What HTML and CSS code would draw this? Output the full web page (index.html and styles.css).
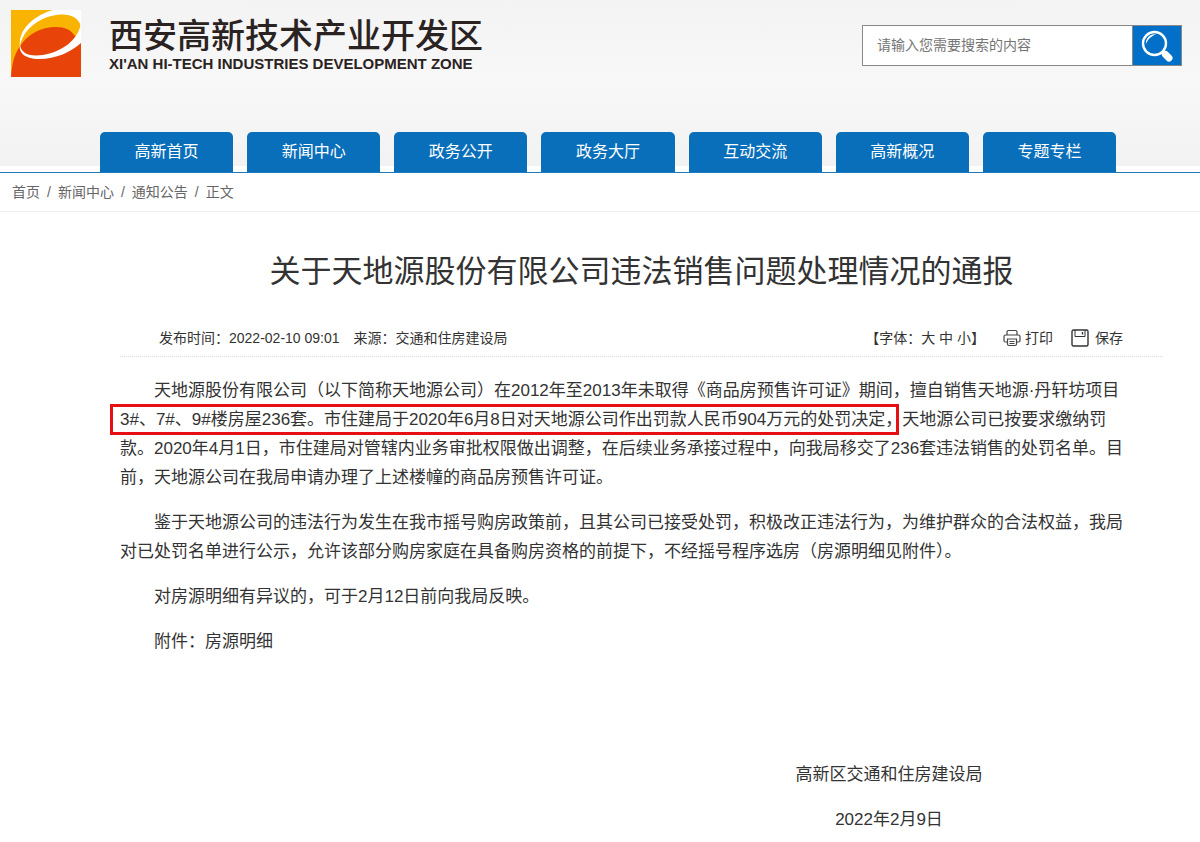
FILE: index.html
```html
<!DOCTYPE html>
<html lang="zh-CN">
<head>
<meta charset="utf-8">
<meta name="viewport" content="width=device-width, initial-scale=1">
<title>关于天地源股份有限公司违法销售问题处理情况的通报</title>
<link rel="stylesheet" href="styles.css">
</head>
<body>
<header class="site-header">
  <div class="masthead">
    <a class="brand" href="#">
      <svg class="brand-mark" viewBox="0 0 70 67" aria-hidden="true">
        <path fill="#f8b400" d="M0 0H70V67H0Z"/>
        <path fill="#e84309" d="M0 67C1 54 3 45 9 36C17 24 30 17 45 17C54 17 60 20 63 25L70 30V67Z"/>
        <path fill="#fff" d="M42 0H70V17C68 7 58 3 45 5C27 8 12 20 9 36C7 19 24 5 42 0Z"/>
        <path fill="#fff" d="M9 33C9 43 17 47 32 45C50 42 67 31 70 13V33C60 42 45 49 28 49C13 49 7 42 9 33Z"/>
      </svg>
      <span class="brand-text">
        <span class="brand-cn">西安高新技术产业开发区</span>
        <span class="brand-en">XI'AN HI-TECH INDUSTRIES DEVELOPMENT ZONE</span>
      </span>
    </a>
    <form class="search">
      <input class="search-input" type="text" aria-label="搜索" placeholder="请输入您需要搜索的内容">
      <button class="search-button" type="submit" aria-label="搜索">
        <svg viewBox="0 0 34 34" aria-hidden="true">
          <circle cx="14.500" cy="14.500" r="11.500" fill="none" stroke="#fff" stroke-width="2.400"/>
          <path d="M6 15C5.500 9 10 5 16 5C11 7.500 8 10 6 15Z" fill="#fff"/>
          <path d="M22 22L25 25" stroke="#fff" stroke-width="3"/>
          <path d="M25.500 25.500L29 29" stroke="#fff" stroke-width="7" stroke-linecap="round"/>
        </svg>
      </button>
    </form>
  </div>
  <nav class="main-nav">
    <a href="#">高新首页</a>
    <a href="#">新闻中心</a>
    <a href="#">政务公开</a>
    <a href="#">政务大厅</a>
    <a href="#">互动交流</a>
    <a href="#">高新概况</a>
    <a href="#">专题专栏</a>
  </nav>
</header>
<nav class="breadcrumb" aria-label="当前位置">
  <a href="#">首页</a><span>/</span><a href="#">新闻中心</a><span>/</span><a href="#">通知公告</a><span>/</span><a href="#">正文</a>
</nav>
<main class="article">
  <h1 class="title">关于天地源股份有限公司违法销售问题处理情况的通报</h1>
  <div class="meta">
    <div class="meta-info">
      <span>发布时间：2022-02-10 09:01</span>
      <span>来源：交通和住房建设局</span>
    </div>
    <div class="meta-tools">
      <div>【字体：<button type="button">大</button> <button type="button">中</button> <button type="button">小</button>】</div>
      <button type="button" class="tool">
        <svg viewBox="0 0 18 18" fill="none" stroke="#444" stroke-width="1.200" aria-hidden="true">
          <path d="M4 6V3Q4 1.500 5.500 1.500H12.500Q14 1.500 14 3V6"/>
          <path d="M4 13H2.500Q1 13 1 11.500V7.500Q1 6 2.500 6H15.500Q17 6 17 7.500V11.500Q17 13 15.500 13H14"/>
          <path d="M4.500 10H13.500V15Q13.500 16.500 12 16.500H6Q4.500 16.500 4.500 15ZM6.500 12.500H11.500M6.500 14.500H11.500"/>
        </svg>打印</button>
      <button type="button" class="tool tool-save">
        <svg viewBox="0 0 18 18" fill="none" stroke="#333" stroke-width="1.400" aria-hidden="true">
          <rect x="1" y="1" width="16" height="16" rx="1.500"/>
          <path d="M4 1V7.500H14V1" stroke-width="1"/>
          <path d="M11.500 3V5.500"/>
        </svg>保存</button>
    </div>
  </div>
  <div class="content">
    <p>天地源股份有限公司（以下简称天地源公司）在2012年至2013年未取得《商品房预售许可证》期间，擅自销售天地源·丹轩坊项目<br><mark class="key">3#、7#、9#楼房屋236套。市住建局于2020年6月8日对天地源公司作出罚款人民币904万元的处罚决定</mark>，天地源公司已按要求缴纳罚<br>款。2020年4月1日，市住建局对管辖内业务审批权限做出调整，在后续业务承接过程中，向我局移交了236套违法销售的处罚名单。目<br>前，天地源公司在我局申请办理了上述楼幢的商品房预售许可证。</p>
    <p>鉴于天地源公司的违法行为发生在我市摇号购房政策前，且其公司已接受处罚，积极改正违法行为，为维护群众的合法权益，我局<br>对已处罚名单进行公示，允许该部分购房家庭在具备购房资格的前提下，不经摇号程序选房（房源明细见附件）。</p>
    <p>对房源明细有异议的，可于2月12日前向我局反映。</p>
    <p>附件：房源明细</p>
  </div>
  <footer class="signature">
    <p>高新区交通和住房建设局</p>
    <p>2022年2月9日</p>
  </footer>
</main>
</body>
</html>
```

FILE: styles.css
```css
* {
  box-sizing: border-box;
}

body {
  margin: 0;
  background: #fff;
  color: #333;
  font-family: "Liberation Sans", "Noto Sans CJK SC", sans-serif;
  font-size: 14px;
}

a {
  color: inherit;
  text-decoration: none;
}

button {
  padding: 0;
  border: 0;
  background: none;
  color: inherit;
  font: inherit;
  cursor: pointer;
}

.site-header {
  border-bottom: 1px solid #2079bb;
  background: linear-gradient(#f3f3f3, #f8f8f8 50%, #f2f2f2) top / 100% 166px no-repeat;
}

.masthead {
  display: flex;
  justify-content: space-between;
  align-items: flex-start;
  height: 132px;
  padding: 10px 18px 0 11px;
}

.brand {
  display: flex;
  gap: 28px;
  color: #2b2322;
}

.brand-mark {
  width: 70px;
  height: 67px;
}

.brand-text {
  display: flex;
  flex-direction: column;
  padding-top: 8px;
  font-weight: 700;
  white-space: nowrap;
}

.brand-cn {
  font-size: 34px;
  font-weight: 500;
  line-height: 36px;
}

.brand-en {
  font-size: 15px;
  line-height: 20px;
}

.search {
  display: flex;
  width: 320px;
  height: 41px;
  margin-top: 15px;
  border: 1px solid #888;
}

.search-input {
  flex: 1;
  min-width: 0;
  padding: 0 14px 2px;
  border: 0;
  border-right: 1px solid #888;
  background: #fff;
  font: inherit;
}

.search-input::placeholder {
  color: #757575;
}

.search-button {
  display: grid;
  place-items: center;
  width: 48px;
  background: #0270c9;
}

.search-button svg {
  width: 34px;
  height: 34px;
}

.main-nav {
  display: flex;
  gap: 14px;
  padding: 0 84px 0 100px;
}

.main-nav a {
  flex: 1;
  height: 40px;
  border-radius: 5px 5px 0 0;
  background: #0a6fba;
  color: #fff;
  font-size: 16px;
  line-height: 40px;
  text-align: center;
}

.breadcrumb {
  display: flex;
  gap: 7px;
  height: 39px;
  padding: 0 12px;
  border-bottom: 1px solid #eee;
  color: #666;
  line-height: 38px;
}

.article {
  padding: 0 37px 0 120px;
}

.title {
  margin: 37px 0 0;
  font-size: 31px;
  font-weight: 400;
  line-height: 46px;
  text-align: center;
}

.meta {
  display: flex;
  justify-content: space-between;
  margin-top: 25px;
  padding: 0 40px 0 39px;
  border-bottom: 1px dotted #ddd;
  line-height: 36px;
}

.meta-info {
  display: flex;
  gap: 14px;
}

.meta-tools {
  display: flex;
  gap: 18px;
}

.tool {
  display: flex;
  align-items: center;
  gap: 4px;
}

.tool-save {
  gap: 6px;
}

.tool svg {
  width: 18px;
  height: 18px;
}

.content {
  padding-top: 19px;
  font-size: 17px;
  line-height: 29px;
}

.content p {
  margin: 0 0 16px;
  text-indent: 2em;
}

.key {
  margin: 0 -8px 0 -4px;
  padding: 0 8px 0 4px;
  outline: 3px solid #e60f14;
  outline-offset: 3px;
  background: none;
  color: inherit;
}

.signature {
  display: flex;
  flex-direction: column;
  align-items: center;
  gap: 16px;
  width: 192px;
  margin: 104px 178px 0 auto;
  padding-bottom: 9px;
  font-size: 17px;
  line-height: 29px;
}

.signature p {
  margin: 0;
}
```
